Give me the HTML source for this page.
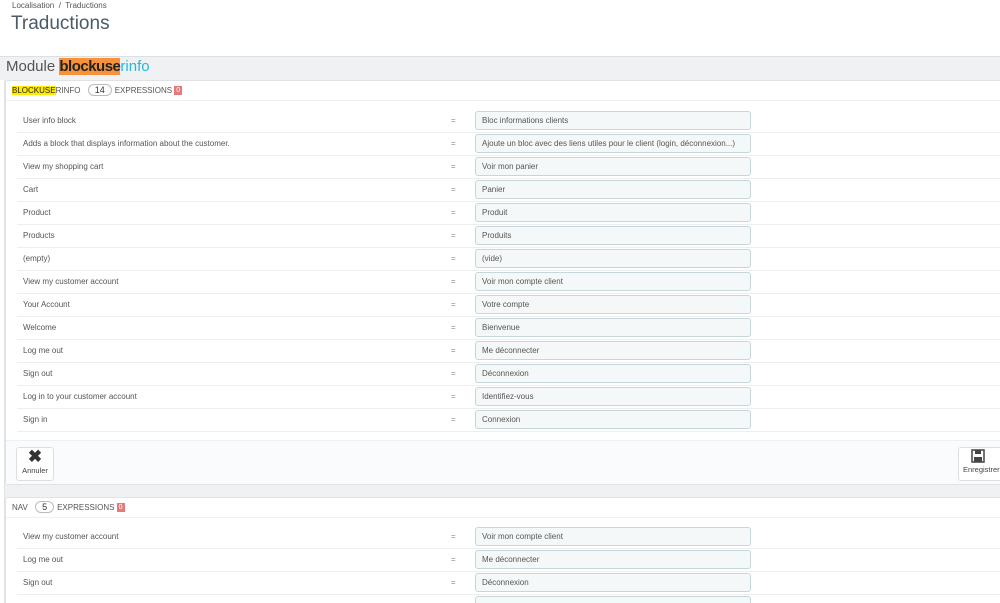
<!DOCTYPE html>
<html><head><meta charset="utf-8"><style>
*{box-sizing:border-box;margin:0;padding:0}
html,body{width:1000px;height:603px;overflow:hidden}
body{background:#eff1f2;font-family:"Liberation Sans",sans-serif;color:#555;position:relative}
.top{position:absolute;left:0;top:0;width:1000px;height:57px;background:#fff;border-bottom:1px solid #dde0e2}
.bc{position:absolute;left:12px;top:1px;font-size:8px;color:#555}
.h1{position:absolute;left:11px;top:13px;font-size:19px;color:#4b5a66}
.mod{position:absolute;left:6px;top:58px;font-size:15px;color:#555;line-height:18px}
.mod .o{background:#f7923b;color:#222;font-weight:bold;letter-spacing:-0.5px}
.mod .b{color:#25b9d7}
.panel{position:absolute;left:5px;width:1000px;background:#fff;border:1px solid #dfe3e6;border-radius:3px}
.ph{height:20px;border-bottom:1px solid #eef0f2;font-size:8px;padding-left:6px;line-height:19px;color:#555}
.ph .y{background:#ffeb00;color:#222}
.badge{display:inline-block;border:1px solid #bbb;border-radius:8px;padding:0 6px;height:12px;line-height:11px;margin:0 3px 0 5px;font-size:9px;color:#333}
.red{display:inline-block;background:#e67a7a;color:#fff;font-size:7px;padding:0 2px;line-height:9px;vertical-align:1px}
.row{position:absolute;left:11px;width:990px;height:23px;border-bottom:1px solid #eceeef;font-size:8px;color:#555}
.row .l{position:absolute;left:6px;top:6px}
.row .e{position:absolute;left:434px;top:6px;color:#888}
.row .i{position:absolute;left:458px;top:1px;width:276px;height:19px;background:#f5f8f9;border:1px solid #c7d6db;border-radius:3px;padding-left:6px;line-height:17px}
.foot{position:absolute;left:0;width:998px;height:44px;background:#fafbfc;border-top:1px solid #eef0f2}
.btn{position:absolute;width:38px;height:34px;background:#fff;border:1px solid #dde0e2;border-radius:3px;font-size:7.5px;text-align:center;color:#444}
.side{position:absolute;left:0;top:80px;width:5px;height:523px;background:#fff;border-right:1px solid #dfe3e6}
</style></head><body>
<div class="top"><div class="bc">Localisation &nbsp;/&nbsp; Traductions</div><div class="h1">Traductions</div></div>
<div class="mod">Module <span class="o">blockuse</span><span class="b">rinfo</span></div>
<div class="side"></div>
<div class="panel" style="top:80px;height:405px">
<div class="ph"><span class="y">BLOCKUSE</span>RINFO <span class="badge">14</span>EXPRESSIONS <span class="red">0</span></div>
<div class="row" style="top:29px"><span class="l">User info block</span><span class="e">=</span><span class="i">Bloc informations clients</span></div>
<div class="row" style="top:52px"><span class="l">Adds a block that displays information about the customer.</span><span class="e">=</span><span class="i">Ajoute un bloc avec des liens utiles pour le client (login, déconnexion...)</span></div>
<div class="row" style="top:75px"><span class="l">View my shopping cart</span><span class="e">=</span><span class="i">Voir mon panier</span></div>
<div class="row" style="top:98px"><span class="l">Cart</span><span class="e">=</span><span class="i">Panier</span></div>
<div class="row" style="top:121px"><span class="l">Product</span><span class="e">=</span><span class="i">Produit</span></div>
<div class="row" style="top:144px"><span class="l">Products</span><span class="e">=</span><span class="i">Produits</span></div>
<div class="row" style="top:167px"><span class="l">(empty)</span><span class="e">=</span><span class="i">(vide)</span></div>
<div class="row" style="top:190px"><span class="l">View my customer account</span><span class="e">=</span><span class="i">Voir mon compte client</span></div>
<div class="row" style="top:213px"><span class="l">Your Account</span><span class="e">=</span><span class="i">Votre compte</span></div>
<div class="row" style="top:236px"><span class="l">Welcome</span><span class="e">=</span><span class="i">Bienvenue</span></div>
<div class="row" style="top:259px"><span class="l">Log me out</span><span class="e">=</span><span class="i">Me déconnecter</span></div>
<div class="row" style="top:282px"><span class="l">Sign out</span><span class="e">=</span><span class="i">Déconnexion</span></div>
<div class="row" style="top:305px"><span class="l">Log in to your customer account</span><span class="e">=</span><span class="i">Identifiez-vous</span></div>
<div class="row" style="top:328px"><span class="l">Sign in</span><span class="e">=</span><span class="i">Connexion</span></div>
<div class="foot" style="top:359px">
<div class="btn" style="left:10px;top:6px"><div style="font-size:17px;font-weight:bold;line-height:18px;color:#333">✖</div>Annuler</div>
<div class="btn" style="left:952px;top:6px;width:50px;text-align:left;padding-left:4px"><svg width="14" height="14" viewBox="0 0 14 14" style="margin:1px 0 0 8px"><rect x="1" y="1" width="12" height="12" fill="none" stroke="#444" stroke-width="1.5"/><rect x="4" y="1" width="6" height="4" fill="#444"/><rect x="3" y="8" width="8" height="5" fill="#444"/></svg><br>Enregistrer</div>
</div>
</div>
<div class="panel" style="top:497px;height:120px">
<div class="ph">NAV <span class="badge">5</span>EXPRESSIONS <span class="red">0</span></div>
<div class="row" style="top:28px"><span class="l">View my customer account</span><span class="e">=</span><span class="i">Voir mon compte client</span></div>
<div class="row" style="top:51px"><span class="l">Log me out</span><span class="e">=</span><span class="i">Me déconnecter</span></div>
<div class="row" style="top:74px"><span class="l">Sign out</span><span class="e">=</span><span class="i">Déconnexion</span></div>
<div class="row" style="top:97px"><span class="e"></span><span class="i"></span></div>
</div>
</body></html>
